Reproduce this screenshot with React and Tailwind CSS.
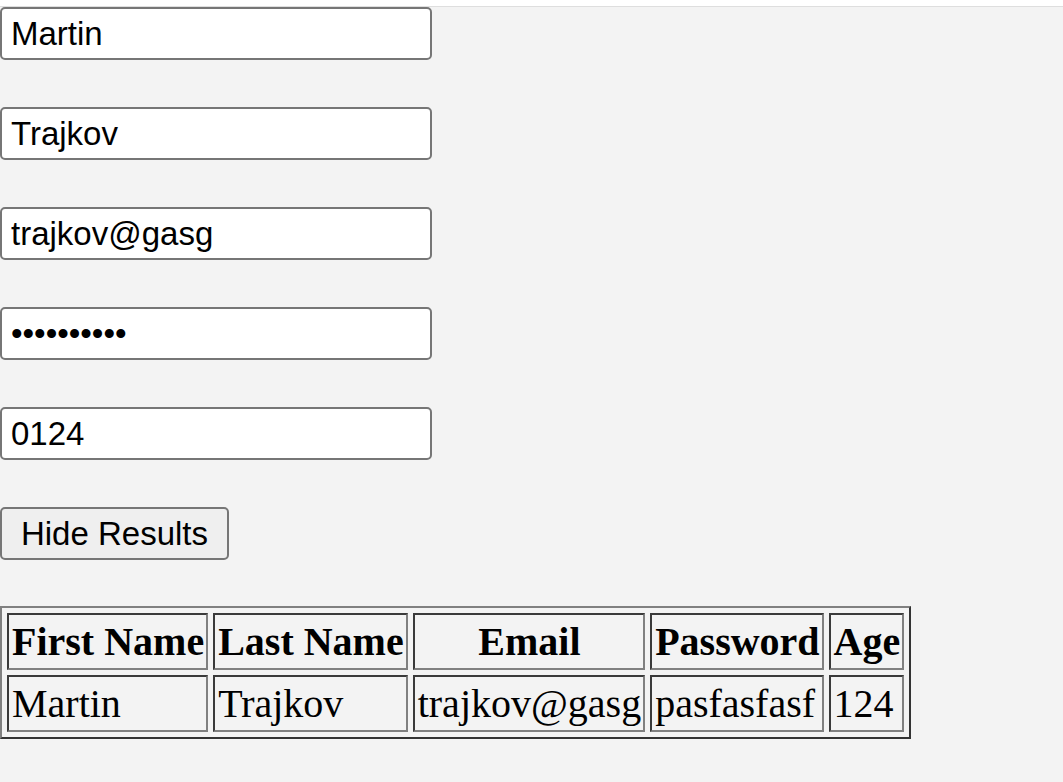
import React from "react";

const inputCls =
  "block w-[432px] h-[53px] box-border bg-white border-2 border-[#767676] rounded-[5px] pl-[9px] pr-[4px] text-[33px] text-black outline-none [font-family:'Liberation_Sans',Arial,sans-serif]";

const thCls =
  "border-2 border-t-[#3a3a3a] border-l-[#3a3a3a] border-b-[#808080] border-r-[#808080] pl-[3px] pr-[2px] py-[3px] font-bold";
const tdCls =
  "border-2 border-t-[#3a3a3a] border-l-[#3a3a3a] border-b-[#808080] border-r-[#808080] pl-[3px] pr-[2px] py-[3px] text-left font-normal";

export default function App() {
  return (
    <div className="min-h-[782px] w-full bg-[#f3f3f3]">
      <div className="h-[7px] bg-white border-b border-[#dedede]" />
      <div className="flex flex-col items-start gap-[47px]">
        <input className={inputCls} defaultValue="Martin" />
        <input className={inputCls} defaultValue="Trajkov" />
        <input className={inputCls} defaultValue="trajkov@gasg" />
        <input className={inputCls} type="password" defaultValue="pasfasfasf" />
        <input className={inputCls} defaultValue="0124" />
        <button className="w-[229px] h-[53px] box-border bg-[#efefef] border-2 border-[#767676] rounded-[5px] text-[33px] text-black [font-family:'Liberation_Sans',Arial,sans-serif]">
          Hide Results
        </button>
        <table className="-mt-px border-separate border-spacing-[5px] border-2 border-t-[#808080] border-l-[#808080] border-b-[#333] border-r-[#333] text-[40px] leading-[47px] text-black [font-family:'Liberation_Serif','Times_New_Roman',serif]">
          <thead>
            <tr>
              <th className={thCls}>First Name</th>
              <th className={thCls}>Last Name</th>
              <th className={thCls}>Email</th>
              <th className={thCls}>Password</th>
              <th className={thCls}>Age</th>
            </tr>
          </thead>
          <tbody>
            <tr>
              <td className={tdCls}>Martin</td>
              <td className={tdCls}>Trajkov</td>
              <td className={tdCls}>trajkov@gasg</td>
              <td className={tdCls}>pasfasfasf</td>
              <td className={tdCls}>124</td>
            </tr>
          </tbody>
        </table>
      </div>
    </div>
  );
}
